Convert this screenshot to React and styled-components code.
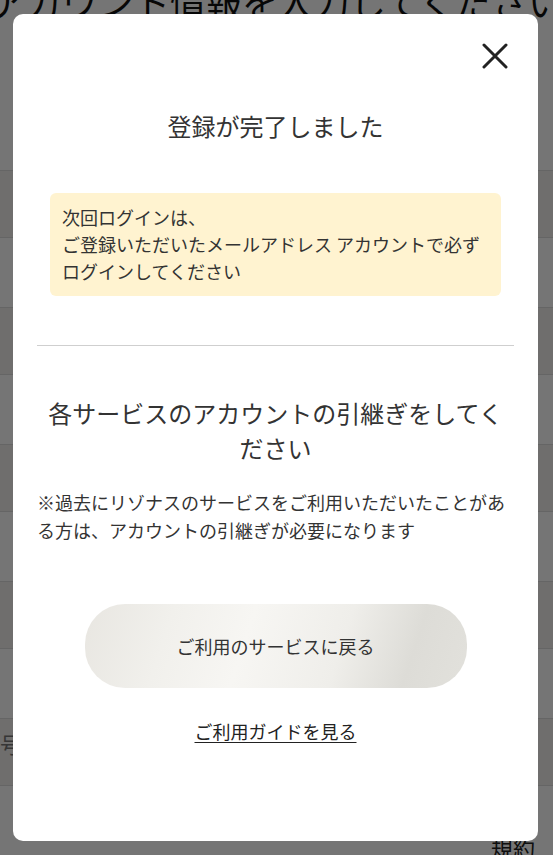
import React from 'react';
import styled, { createGlobalStyle } from 'styled-components';

const GlobalStyle = createGlobalStyle`
  html, body {
    margin: 0;
    padding: 0;
    height: 100%;
    overflow: hidden;
  }
  body {
    font-family: "Noto Sans CJK JP", "Noto Sans", sans-serif;
    color: #333;
    background: #fff;
  }
`;

/* the form page that sits behind the modal */
const BackPage = styled.div`
  height: 855px;
  overflow: hidden;
  background: #fff;
`;

const BackTitle = styled.h1`
  margin: -13px 0 0 -10px;
  font-family: "Liberation Serif", "Noto Sans CJK JP", serif;
  font-size: 36px;
  font-weight: 400;
  line-height: 36px;
  white-space: nowrap;
  color: #111;
`;

const BackForm = styled.div`
  display: flex;
  flex-direction: column;
  gap: 69px;
  padding-top: 147px;
`;

const BackField = styled.div`
  height: 66px;
  background: #f1f0ee;
  border-top: 1px solid #dcdcdc;
  border-bottom: 1px solid #dcdcdc;
`;

const BackLabel = styled.div`
  margin: 16px 0 0 -66px;
  font-family: "Liberation Serif", "Noto Sans CJK JP", serif;
  font-size: 22px;
  line-height: 22px;
  color: #777;
  white-space: nowrap;
`;

const BackFooter = styled.div`
  display: flex;
  justify-content: flex-end;
  padding-right: 18px;
  margin-top: 52px;
  font-family: "Liberation Serif", "Noto Sans CJK JP", serif;
  font-size: 22px;
  line-height: 24px;
  color: #222;
`;

const Overlay = styled.div`
  position: fixed;
  inset: 0;
  background: rgba(0, 0, 0, 0.54);
  display: flex;
  align-items: flex-start;
  padding: 14px 15px 0 13px;
`;

const Modal = styled.div`
  width: 525px;
  height: 827px;
  box-sizing: border-box;
  background: #fff;
  border-radius: 10px;
  padding: 0 24px;
  display: flex;
  flex-direction: column;
`;

const Header = styled.div`
  display: flex;
  justify-content: flex-end;
  padding: 29px 6px 0 0;
`;

const CloseButton = styled.button`
  width: 26px;
  height: 26px;
  padding: 0;
  border: 0;
  background: none;
  cursor: pointer;
  display: flex;
  align-items: center;
  justify-content: center;
`;

const Title = styled.h2`
  margin: 42px 0 0;
  font-size: 24px;
  font-weight: 400;
  line-height: 30px;
  text-align: center;
  color: #333;
`;

const Notice = styled.div`
  margin: 52px 13px 0;
  padding: 11px 12px;
  background: #fff3d0;
  border-radius: 6px;
  font-size: 18px;
  line-height: 27px;
  color: #333;
`;

const Divider = styled.hr`
  margin: 49px 0 0;
  border: 0;
  border-top: 1px solid #cfcfcf;
`;

const Heading = styled.h3`
  margin: 49px 0 0;
  font-size: 24px;
  font-weight: 400;
  line-height: 35px;
  text-align: center;
  color: #333;
`;

const Note = styled.p`
  margin: 23px 0 0;
  font-size: 18px;
  line-height: 28px;
  color: #333;
`;

const PrimaryButton = styled.button`
  align-self: center;
  margin-top: 60px;
  width: 382px;
  height: 84px;
  border: 0;
  border-radius: 40px;
  background: linear-gradient(
    108deg,
    #e8e6e1 0%,
    #f1f0ec 22%,
    #f7f6f3 42%,
    #efeeea 66%,
    #dddcd7 84%,
    #e2e1dc 100%
  );
  font-family: inherit;
  font-size: 18px;
  color: #333;
  cursor: pointer;
`;

const GuideLink = styled.a`
  align-self: center;
  margin-top: 30px;
  font-size: 18px;
  line-height: 27px;
  color: #222;
  text-decoration: underline;
  text-underline-offset: 3px;
  text-decoration-thickness: 1px;
  cursor: pointer;
`;

const CloseIcon = () => (
  <svg width="26" height="26" viewBox="0 0 26 26" fill="none">
    <path
      d="M2 2 L24 24 M24 2 L2 24"
      stroke="#222"
      strokeWidth="3"
      strokeLinecap="round"
    />
  </svg>
);

export default function App() {
  return (
    <>
      <GlobalStyle />
      <BackPage>
        <BackTitle>アカウント情報を入力してください</BackTitle>
        <BackForm>
          <BackField />
          <BackField />
          <BackField />
          <BackField />
          <BackField>
            <BackLabel>電話番号</BackLabel>
          </BackField>
        </BackForm>
        <BackFooter>規約</BackFooter>
      </BackPage>

      <Overlay>
        <Modal role="dialog" aria-modal="true">
          <Header>
            <CloseButton aria-label="閉じる">
              <CloseIcon />
            </CloseButton>
          </Header>
          <Title>登録が完了しました</Title>
          <Notice>
            次回ログインは、
            <br />
            ご登録いただいたメールアドレス アカウントで必ず
            <br />
            ログインしてください
          </Notice>
          <Divider />
          <Heading>各サービスのアカウントの引継ぎをしてください</Heading>
          <Note>
            ※過去にリゾナスのサービスをご利用いただいたことがある方は、アカウントの引継ぎが必要になります
          </Note>
          <PrimaryButton>ご利用のサービスに戻る</PrimaryButton>
          <GuideLink>ご利用ガイドを見る</GuideLink>
        </Modal>
      </Overlay>
    </>
  );
}
